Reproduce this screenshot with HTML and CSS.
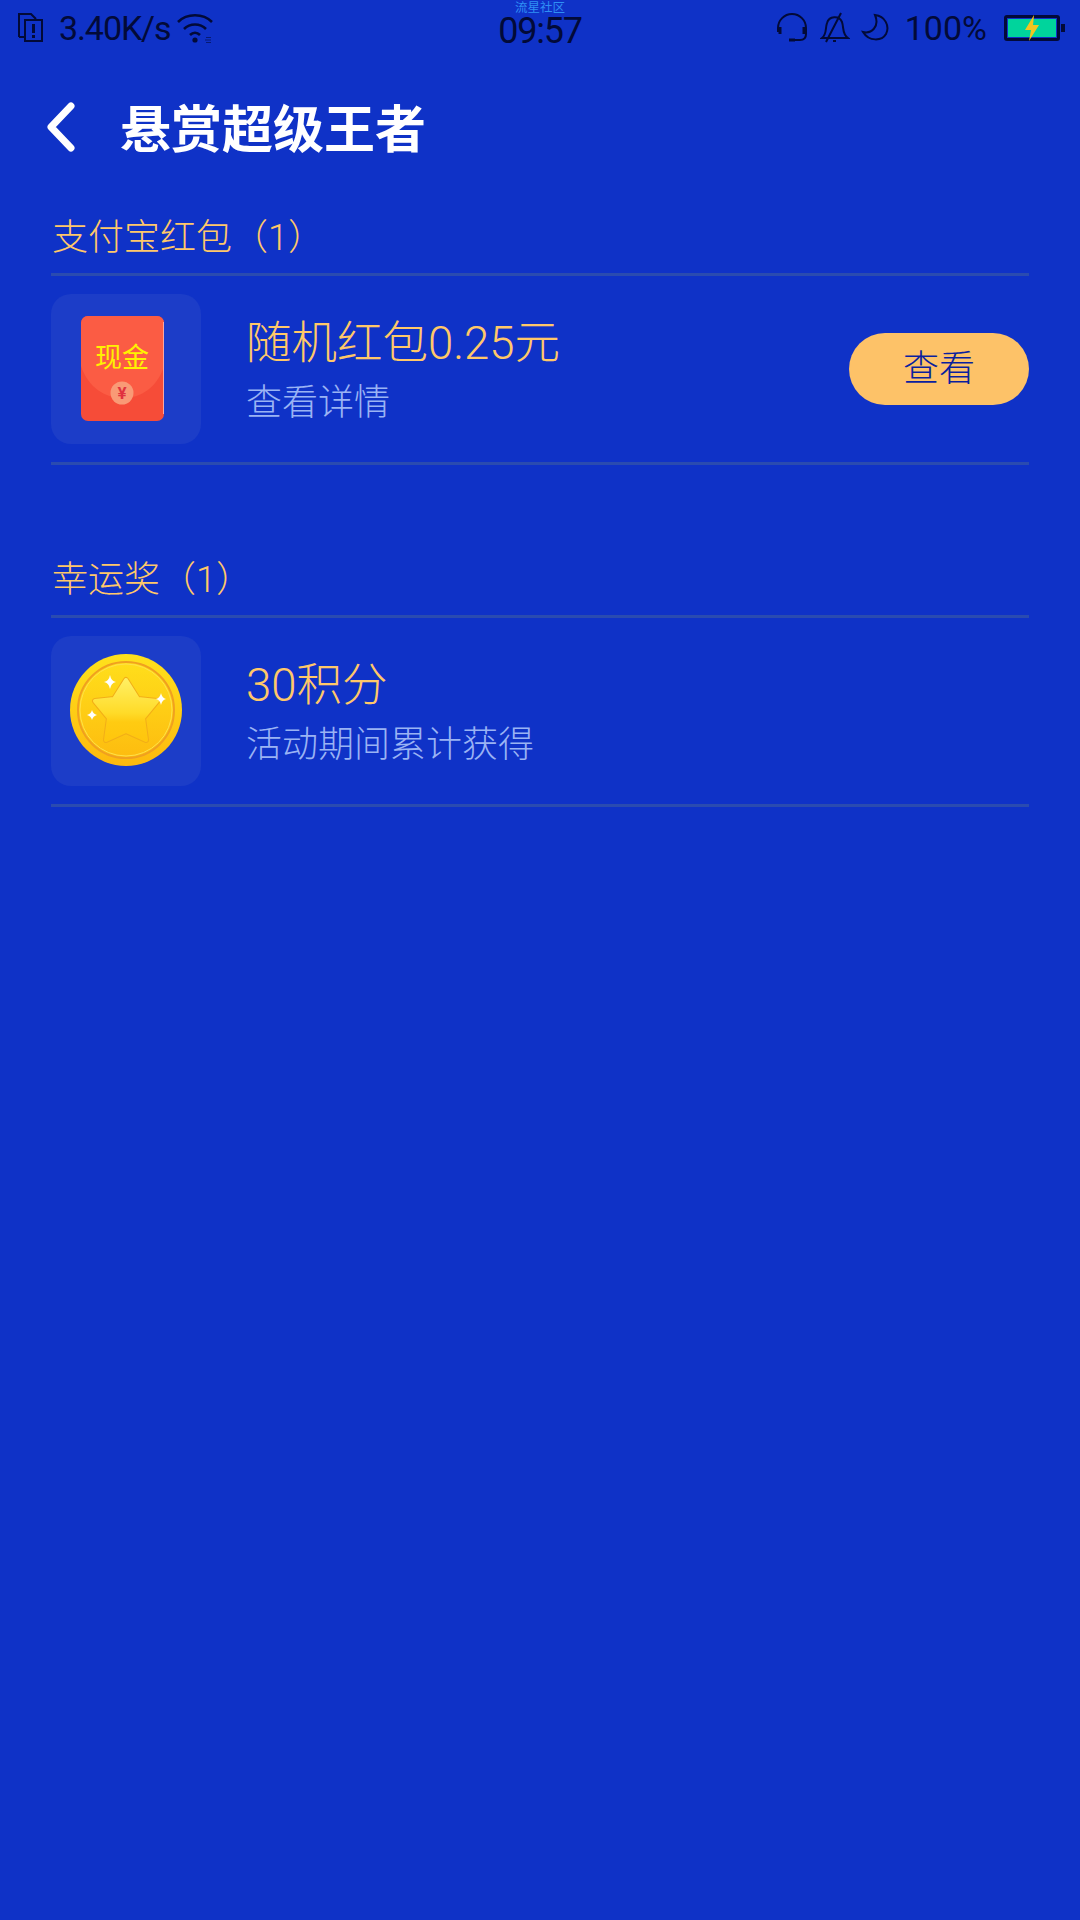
FILE: index.html
```html
<!DOCTYPE html>
<html lang="zh-CN">
    <head>
        <meta charset="UTF-8">
        <title>悬赏超级王者</title>
        <link rel="stylesheet" href="styles.css">
    </head>
    <body>
        <div class="status">
            <div class="status-left">
                <svg class="ic-sim" width="27" height="32" viewBox="0 0 27 32" fill="none" stroke="#020a38" stroke-width="2">
                    <path d="M2 25V2h12l5 5M2 25h5"/>
                    <rect x="8" y="8" width="17" height="21"/>
                    <path d="M16.500 12v9M16.500 23v3" stroke-width="3"/>
                </svg>
                <span class="speed">3.40K/s</span>
                <svg class="ic-wifi" width="38" height="32" viewBox="0 0 38 32" fill="none" stroke="#020a38">
                    <path d="M1 10C10 1 26 1 35 10" stroke-width="2.600"/>
                    <path d="M7 17C13 11 23 11 29 17" stroke-width="2.600"/>
                    <path d="M13 23C16 20 20 20 23 23" stroke-width="2.600"/>
                    <circle cx="18" cy="28" r="2.600" fill="#020a38" stroke="none"/>
                    <path d="M29 25.500h5M28 28h6M29 30.500h5" stroke-width="1" opacity=".6"/>
                </svg>
            </div>
            <div class="status-mid">
                <span class="carrier">流星社区</span>
                <span class="clock">09:57</span>
            </div>
            <div class="status-right">
                <svg width="32" height="30" viewBox="0 0 32 30" fill="none" stroke="#020a38" stroke-width="2">
                    <path d="M2 19V15A14 14 0 0 1 30 15V21C30 25 28 27 24 27H13"/>
                    <path d="M4 14v7M28 14v7M13 27h6" stroke-width="3"/>
                </svg>
                <svg class="ic-bell" width="30" height="32" viewBox="0 0 30 32" fill="none" stroke="#020a38" stroke-width="2">
                    <path d="M2 26C7 22 5 17 7 11C9 4 19 3 22 10C24 16 22 22 28 26Z"/>
                    <path d="M21 1L6 30M13 29h3"/>
                </svg>
                <svg class="ic-moon" width="28" height="30" viewBox="0 0 28 30" fill="none" stroke="#020a38" stroke-width="2">
                    <path d="M14 2C24 3 29 13 25 21C21 28 8 29 2 19C10 21 19 14 14 2Z"/>
                </svg>
                <span class="battery-pct">100%</span>
                <div class="battery">
                    <div class="battery-fill">
                        <svg width="16" height="26" viewBox="0 0 16 26"><path d="M10 0L1 15H7L5 26L15 10H9Z" fill="#f2c520"/></svg>
                    </div>
                </div>
                <div class="battery-tip"></div>
            </div>
        </div>

        <div class="header">
            <svg width="32" height="50" viewBox="0 0 32 50" fill="none" stroke="#fff" stroke-width="7" stroke-linecap="round" stroke-linejoin="round">
                <path d="M25 4L5 25L25 46"/>
            </svg>
            <h1>悬赏超级王者</h1>
        </div>

        <div class="section">
            <h2>支付宝红包（1）</h2>
            <div class="row">
                <div class="thumb">
                    <svg class="envelope" width="84" height="106" viewBox="0 0 84 106">
                        <rect x="0" y="0" width="83" height="105" rx="7" fill="#f64c38"/>
                        <path d="M0 7a7 7 0 0 1 7-7H76a7 7 0 0 1 7 7V50C70 93 14 93 0 50Z" fill="#fb5c44"/>
                        <path d="M82.500 6V98" stroke="#f9a7a0" stroke-width="1"/>
                        <circle cx="41" cy="77" r="11.500" fill="#f99a76"/>
                        <text x="41" y="83" class="yen">¥</text>
                        <text x="41" y="51" class="cash">现金</text>
                    </svg>
                </div>
                <div class="info">
                    <div class="info-title">随机红包0.25元</div>
                    <div class="info-sub">查看详情</div>
                </div>
                <div class="btn">查看</div>
            </div>
        </div>

        <div class="section">
            <h2>幸运奖（1）</h2>
            <div class="row">
                <div class="thumb">
                    <svg class="coin" width="112" height="112" viewBox="0 0 112 112">
                        <defs>
                            <linearGradient id="coin" x1="0" y1="0" x2="0" y2="1">
                                <stop offset="0" stop-color="#ffe11c"/>
                                <stop offset="1" stop-color="#fdb90e"/>
                            </linearGradient>
                            <linearGradient id="star" x1="0" y1="0" x2="0" y2="1">
                                <stop offset="0" stop-color="#ffef62"/>
                                <stop offset=".55" stop-color="#ffdb28"/>
                                <stop offset=".7" stop-color="#ffcb12"/>
                                <stop offset="1" stop-color="#ffc60d"/>
                            </linearGradient>
                        </defs>
                        <circle cx="56" cy="56" r="56" fill="url(#coin)"/>
                        <circle cx="56" cy="56" r="48" fill="none" stroke="#f0a020" stroke-width="2"/>
                        <circle cx="56" cy="56" r="46" fill="none" stroke="#ffe14a" stroke-width="1"/>
                        <path d="M56 26L68 45L87 47L73 64L76 86L56 77L36 86L39 64L25 47L44 45Z" fill="#f2ae17" stroke="#f2ae17" stroke-width="6" stroke-linejoin="round"/>
                        <path d="M56 26L68 45L87 47L73 64L76 86L56 77L36 86L39 64L25 47L44 45Z" fill="url(#star)" stroke="url(#star)" stroke-width="4" stroke-linejoin="round"/>
                        <path d="M40 21Q41 27 46 28Q41 29 40 35Q39 29 34 28Q39 27 40 21ZM91 39Q92 44 96 45Q92 46 91 51Q90 46 86 45Q90 44 91 39ZM22 56Q23 60 27 61Q23 62 22 66Q21 62 17 61Q21 60 22 56Z" fill="#fff"/>
                    </svg>
                </div>
                <div class="info">
                    <div class="info-title">30积分</div>
                    <div class="info-sub">活动期间累计获得</div>
                </div>
            </div>
        </div>
    </body>
</html>
```

FILE: styles.css
```css
body {
    margin: 0;
    width: 1080px;
    height: 1920px;
    overflow: hidden;
    background-color: #0f32c7;
    font-family: Roboto, "Noto Sans CJK SC", sans-serif;
}

.status {
    display: grid;
    grid-template-columns: 1fr auto 1fr;
    height: 56px;
    color: #020a38;
}
.status-left, .status-right {
    display: flex;
    align-items: center;
}
.status-left {
    padding-left: 17px;
}
.status-right {
    justify-content: flex-end;
    padding-right: 15px;
}
.status-right svg {
    margin-right: 12px;
}
.status-right .ic-bell {
    margin-right: 11px;
}
.status-right .ic-moon {
    margin-right: 16px;
}
.speed {
    font-size: 34px;
    letter-spacing: -1.100px;
    margin-left: 15px;
    margin-right: 6px;
}
.battery-pct {
    font-size: 34px;
    margin-right: 17px;
}
.status-mid {
    display: flex;
    flex-direction: column;
    align-items: center;
}
.carrier {
    font-family: "Noto Sans CJK SC", sans-serif;
    font-size: 12.500px;
    line-height: 13px;
    color: #2f8ff5;
}
.clock {
    font-size: 36px;
    line-height: 36px;
    letter-spacing: -1.200px;
}
.battery {
    width: 48px;
    height: 18px;
    border: 3px solid #020a38;
    border-radius: 3px;
    padding: 1px;
}
.battery-fill {
    display: flex;
    justify-content: center;
    align-items: center;
    height: 100%;
    background-color: #00d49c;
}
.status-right .battery-fill svg {
    margin: 0;
}
.battery-tip {
    width: 4px;
    height: 8px;
    margin-left: 1px;
    background-color: #020a38;
}

.header {
    display: flex;
    align-items: center;
    height: 88px;
    margin-top: 27px;
    margin-bottom: 21px;
    padding-left: 46px;
}
.header h1 {
    margin: -3px 0 0 42px;
    font-size: 51px;
    font-weight: 700;
    color: #fff;
}

.section {
    margin: 0 51px;
    padding-bottom: 69px;
}
.section h2 {
    margin: 0;
    padding: 6px 0 0 1px;
    height: 84px;
    line-height: 80px;
    font-size: 36px;
    font-weight: 300;
    color: #ffc869;
    border-bottom: 3px solid #2a4bb0;
    box-sizing: border-box;
}
.row {
    display: flex;
    align-items: center;
    padding: 18px 0;
    border-bottom: 3px solid #2a4bb0;
}
.thumb {
    display: flex;
    justify-content: center;
    align-items: center;
    width: 150px;
    height: 150px;
    border-radius: 20px;
    background-color: #1c3dc8;
}
.thumb svg {
    display: block;
}
.thumb .envelope {
    margin-right: 6px;
}
.thumb .coin {
    margin-top: -2px;
}
.info {
    flex: 1;
    margin-left: 45px;
    padding-top: 4px;
}
.info-title {
    font-size: 45.500px;
    line-height: 64px;
    font-weight: 300;
    color: #ffc869;
}
.info-sub {
    font-size: 36px;
    line-height: 54px;
    font-weight: 300;
    color: #9ab3f4;
}
.btn {
    width: 180px;
    height: 72px;
    line-height: 72px;
    border-radius: 36px;
    text-align: center;
    font-size: 36px;
    font-weight: 300;
    color: #0a1f9e;
    background-color: #fdc268;
}
.cash {
    font-size: 27px;
    font-weight: 400;
    fill: #fff200;
    text-anchor: middle;
}
.yen {
    font-size: 17px;
    font-weight: 700;
    fill: #e0323f;
    text-anchor: middle;
}
```
